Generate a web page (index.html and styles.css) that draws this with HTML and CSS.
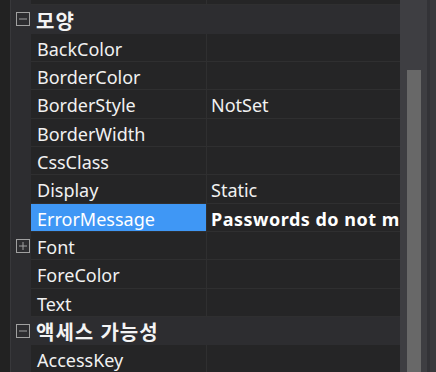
FILE: index.html
```html
<!DOCTYPE html>
<html lang="ko">
<head>
  <meta charset="UTF-8">
  <title>Properties</title>
  <link rel="stylesheet" href="styles.css">
</head>
<body>
  <div class="window">
    <div class="edge"></div>
    <div class="grid">
      <div class="row first"><div class="name">Width</div><div class="value"></div></div>

      <div class="category">
        <svg class="toggle" width="14" height="14" viewBox="0 0 14 14"><rect x="0.5" y="0.5" width="13" height="13" fill="none" stroke="#a0a0a0"/><line x1="3" y1="7" x2="11" y2="7" stroke="#a0a0a0"/></svg>
        <span>모양</span>
      </div>
      <div class="row"><div class="name">BackColor</div><div class="value"></div></div>
      <div class="row"><div class="name">BorderColor</div><div class="value"></div></div>
      <div class="row"><div class="name">BorderStyle</div><div class="value">NotSet</div></div>
      <div class="row"><div class="name">BorderWidth</div><div class="value"></div></div>
      <div class="row"><div class="name">CssClass</div><div class="value"></div></div>
      <div class="row"><div class="name">Display</div><div class="value">Static</div></div>
      <div class="row selected"><div class="name">ErrorMessage</div><div class="value changed">Passwords do not match</div></div>
      <div class="row expandable">
        <svg class="toggle" width="14" height="14" viewBox="0 0 14 14"><rect x="0.5" y="0.5" width="13" height="13" fill="none" stroke="#a0a0a0"/><line x1="3" y1="7" x2="11" y2="7" stroke="#a0a0a0"/><line x1="7" y1="3" x2="7" y2="11" stroke="#a0a0a0"/></svg>
        <div class="name">Font</div><div class="value"></div>
      </div>
      <div class="row"><div class="name">ForeColor</div><div class="value"></div></div>
      <div class="row"><div class="name">Text</div><div class="value"></div></div>

      <div class="category">
        <svg class="toggle" width="14" height="14" viewBox="0 0 14 14"><rect x="0.5" y="0.5" width="13" height="13" fill="none" stroke="#a0a0a0"/><line x1="3" y1="7" x2="11" y2="7" stroke="#a0a0a0"/></svg>
        <span>액세스 가능성</span>
      </div>
      <div class="row"><div class="name">AccessKey</div><div class="value"></div></div>
    </div>
    <div class="scrollbar"><div class="thumb"></div></div>
    <div class="scroll-edge"></div>
  </div>
</body>
</html>
```

FILE: styles.css
```css
body {
  margin: 0;
  background-color: #252526;
  font-family: 'Noto Sans', 'Noto Sans CJK KR', sans-serif;
  font-size: 18px;
  color: #f1f1f1;
  overflow: hidden;
}
.window {
  display: flex;
  height: 372px;
  overflow: hidden;
}
.edge {
  width: 10px;
  flex-shrink: 0;
  background-color: #222222;
  border-right: 1px solid #38383b;
}
.grid {
  width: 389px;
  flex-shrink: 0;
  background-color: #2d2d30;
  overflow: hidden;
}
.row {
  position: relative;
  display: flex;
  box-sizing: border-box;
  height: 28.333px;
  margin-left: 20px;
  background-color: #252526;
  border-bottom: 1px solid #2f2f30;
}
.row.first {
  margin-top: -23px;
}
.name {
  width: 176px;
  flex-shrink: 0;
  box-sizing: border-box;
  padding: 4px 0 0 6px;
  line-height: 23.3px;
  border-right: 1px solid #2f2f30;
  white-space: nowrap;
  overflow: hidden;
}
.value {
  flex: 1;
  padding: 4px 0 0 4px;
  line-height: 23.3px;
  white-space: nowrap;
  overflow: hidden;
}
.value.changed {
  font-weight: bold;
  letter-spacing: 0.5px;
  color: #ffffff;
}
.selected .name {
  background-color: #3f97f5;
  color: #ffffff;
}
.category {
  display: flex;
  align-items: center;
  box-sizing: border-box;
  height: 28.333px;
  padding-left: 5px;
  font-weight: bold;
  font-size: 20px;
  letter-spacing: 1px;
  color: #f4f4f4;
}
.category .toggle {
  margin-right: 6px;
}
.category span {
  padding-top: 1px;
}
.expandable .toggle {
  position: absolute;
  left: -15px;
  top: 7px;
}
.scrollbar {
  width: 27px;
  flex-shrink: 0;
  box-sizing: border-box;
  padding: 70px 6px 0 7px;
  background-color: #3e3e42;
}
.thumb {
  height: 100%;
  background-color: #686868;
}
.scroll-edge {
  flex: 1;
  background-color: #3a3a3d;
  border-left: 3px solid #333337;
}
```
